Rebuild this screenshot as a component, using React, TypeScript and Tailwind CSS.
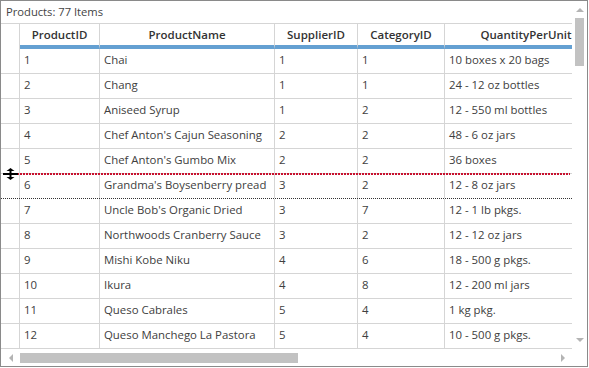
import React from "react";

type Row = { id: string; name: string; sup: string; cat: string; qty: string };

const rows: Row[] = [
  { id: "1", name: "Chai", sup: "1", cat: "1", qty: "10 boxes x 20 bags" },
  { id: "2", name: "Chang", sup: "1", cat: "1", qty: "24 - 12 oz bottles" },
  { id: "3", name: "Aniseed Syrup", sup: "1", cat: "2", qty: "12 - 550 ml bottles" },
  { id: "4", name: "Chef Anton's Cajun Seasoning", sup: "2", cat: "2", qty: "48 - 6 oz jars" },
  { id: "5", name: "Chef Anton's Gumbo Mix", sup: "2", cat: "2", qty: "36 boxes" },
  { id: "6", name: "Grandma's Boysenberry pread", sup: "3", cat: "2", qty: "12 - 8 oz jars" },
  { id: "7", name: "Uncle Bob's Organic Dried", sup: "3", cat: "7", qty: "12 - 1 lb pkgs." },
  { id: "8", name: "Northwoods Cranberry Sauce", sup: "3", cat: "2", qty: "12 - 12 oz jars" },
  { id: "9", name: "Mishi Kobe Niku", sup: "4", cat: "6", qty: "18 - 500 g pkgs." },
  { id: "10", name: "Ikura", sup: "4", cat: "8", qty: "12 - 200 ml jars" },
  { id: "11", name: "Queso Cabrales", sup: "5", cat: "4", qty: "1 kg pkg." },
  { id: "12", name: "Queso Manchego La Pastora", sup: "5", cat: "4", qty: "10 - 500 g pkgs." },
];

const cellBase = "shrink-0 flex items-center pl-[4px] pb-[3px] border-r border-[#d5d5d5] whitespace-nowrap overflow-hidden";

function Tri({ dir }: { dir: "up" | "down" | "left" | "right" }) {
  const pts =
    dir === "up"
      ? "0,4 4,0 8,4"
      : dir === "down"
      ? "0,0 8,0 4,4"
      : dir === "left"
      ? "4,0 4,8 0,4"
      : "0,0 0,8 4,4";
  const w = dir === "up" || dir === "down" ? 8 : 4;
  const h = dir === "up" || dir === "down" ? 4 : 8;
  return (
    <svg width={w} height={h} viewBox={`0 0 ${w} ${h}`}>
      <polygon points={pts} fill="#b4b4b4" />
    </svg>
  );
}

export default function App() {
  return (
    <div className="relative w-[588px] h-[367px] border border-[#8a8a8a] bg-white font-['Segoe_UI','Open_Sans',sans-serif] text-[11.4px] text-[#404040] flex overflow-hidden">
      {/* main area */}
      <div className="w-[571px] flex flex-col overflow-hidden">
        <div className="h-[22px] flex items-center pl-[5px] text-[11.2px] text-[#444] shrink-0">Products: 77 Items</div>
        {/* header */}
        <div className="flex border-t border-[#d5d5d5] h-[26px] shrink-0 font-semibold text-[11.5px] text-[#333]">
          <div className="w-[19px] shrink-0 border-r border-[#d5d5d5]" />
          <div className="w-[80px] shrink-0 border-r border-[#d5d5d5] border-b-4 border-b-[#64a0d2] flex items-center justify-center">ProductID</div>
          <div className="w-[175px] shrink-0 border-r border-[#d5d5d5] border-b-4 border-b-[#64a0d2] flex items-center justify-center">ProductName</div>
          <div className="w-[83px] shrink-0 border-r border-[#d5d5d5] border-b-4 border-b-[#64a0d2] flex items-center justify-center">SupplierID</div>
          <div className="w-[87px] shrink-0 border-r border-[#d5d5d5] border-b-4 border-b-[#64a0d2] flex items-center justify-center">CategoryID</div>
          <div className="w-[163px] shrink-0 border-r border-[#d5d5d5] border-b-4 border-b-[#64a0d2] flex items-center justify-center">QuantityPerUnit</div>
          <div className="w-[100px] shrink-0 border-b-4 border-b-[#64a0d2]" />
        </div>
        {/* rows */}
        <div className="flex flex-col shrink-0">
          {rows.map((r) => (
            <div
              key={r.id}
              className={
                r.id === "6"
                  ? "flex h-[25px] border-b border-dotted border-b-[#333]"
                  : "flex h-[25px] border-b border-[#d5d5d5]"
              }
            >
              <div className="w-[19px] shrink-0 border-r border-[#d5d5d5]" />
              <div className={`${cellBase} w-[80px]`}>{r.id}</div>
              <div className={`${cellBase} w-[175px]`}>{r.name}</div>
              <div className={`${cellBase} w-[83px]`}>{r.sup}</div>
              <div className={`${cellBase} w-[87px]`}>{r.cat}</div>
              <div className={`${cellBase} w-[163px]`}>{r.qty}</div>
            </div>
          ))}
        </div>
        {/* horizontal scrollbar */}
        <div className="h-[17px] flex items-center shrink-0">
          <div className="w-[18px] flex justify-center pl-[1px]">
            <Tri dir="left" />
          </div>
          <div className="ml-[1px] w-[278px] h-[10px] bg-[#c2c2c2]" />
          <div className="flex-1" />
          <div className="w-[15px] flex justify-center mr-[2px]">
            <Tri dir="right" />
          </div>
        </div>
      </div>
      {/* vertical scrollbar */}
      <div className="w-[15px] flex flex-col">
        <div className="h-[347px] flex flex-col">
          <div className="h-[17px] flex items-center justify-center">
            <Tri dir="up" />
          </div>
          <div className="ml-[3px] w-[9px] h-[48px] bg-[#c2c2c2]" />
          <div className="flex-1" />
          <div className="h-[16px] flex items-center justify-center">
            <Tri dir="down" />
          </div>
        </div>
      </div>

      {/* drag indicator line (red dashed) */}
      <div className="absolute left-[16px] top-[172px] w-[553px] h-[2px] bg-[repeating-linear-gradient(90deg,#c8102e_0px,#c8102e_2px,transparent_2px,transparent_3px)]" />
      {/* row resize cursor */}
      <svg className="absolute left-[2px] top-[167px]" width="15" height="12" viewBox="0 0 15 12">
        <rect x="0" y="5" width="15" height="2" fill="#000" />
        <rect x="6.5" y="2" width="2" height="8" fill="#000" />
        <polygon points="3.5,3 7.5,0 11.5,3" fill="#000" />
        <polygon points="3.5,9 11.5,9 7.5,12" fill="#000" />
      </svg>
    </div>
  );
}
